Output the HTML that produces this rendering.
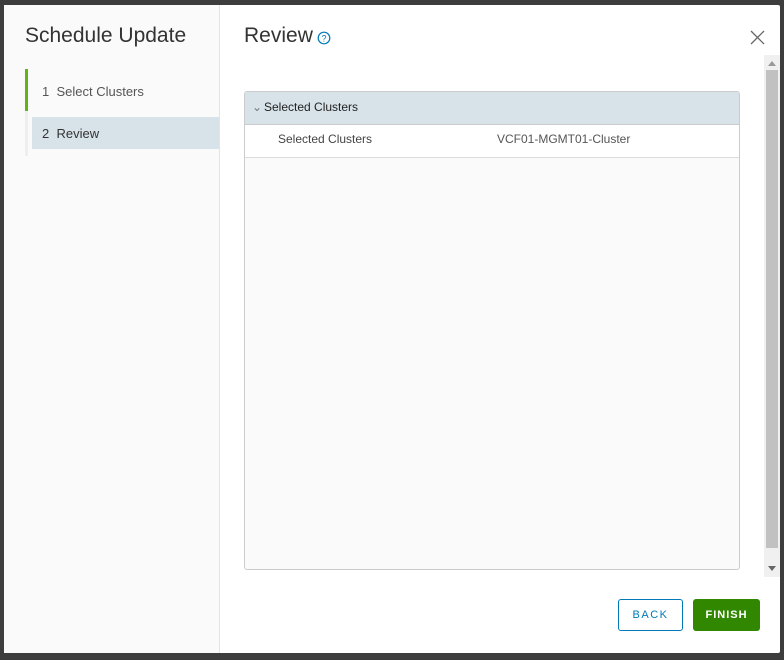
<!DOCTYPE html>
<html><head><style>
body{margin:0;width:784px;height:660px;background:#3d3d3d;font-family:"Liberation Sans",sans-serif;position:relative;overflow:hidden}
.dlg{position:absolute;left:4px;top:5px;width:776px;height:648px;background:#fff;border-radius:2px}
.left{position:absolute;left:0;top:0;width:215px;height:648px;background:#fafafa;border-right:1px solid #e4e4e4}
.t{position:absolute;font-size:21px;color:#333;font-weight:300}
.s{position:absolute;font-size:13px;color:#444}
</style></head><body>
<div class="dlg">
<div class="left">
<div class="t" style="left:21px;top:19px">Schedule Update</div>
<div style="position:absolute;left:21px;top:64px;width:3px;height:87px;background:#eee"></div>
<div style="position:absolute;left:21px;top:64px;width:3px;height:42px;background:#60b515"></div>
<div class="s" style="left:38px;top:79px;color:#555">1&nbsp;&nbsp;Select Clusters</div>
<div style="position:absolute;left:28px;top:112px;width:187px;height:32px;background:#d8e3e9"></div>
<div class="s" style="left:38px;top:121px;color:#333">2&nbsp;&nbsp;Review</div>
</div>
<div class="t" style="left:240px;top:19px">Review</div>
<svg style="position:absolute;left:313px;top:26px" width="14" height="14" viewBox="0 0 14 14"><circle cx="7" cy="7" r="5.8" fill="none" stroke="#0079b8" stroke-width="1.2"/><text x="7" y="10.5" font-size="9" text-anchor="middle" fill="#0079b8" font-family="Liberation Sans">?</text></svg>
<svg style="position:absolute;left:746px;top:25px" width="15" height="15" viewBox="0 0 15 15"><path d="M1 1L14 14M14 1L1 14" stroke="#666" stroke-width="1.3"/></svg>
<div style="position:absolute;left:240px;top:86px;width:494px;height:477px;border:1px solid #ccc;border-radius:3px;background:#fafafa;overflow:hidden">
<div style="height:32px;background:#d8e3e9;border-bottom:1px solid #ccc"></div>
<div style="position:absolute;left:7px;top:8px;font-size:12px;color:#777">&#8964;</div>
<div class="s" style="left:19px;top:8px;font-size:12px;color:#222">Selected Clusters</div>
<div style="height:32px;background:#fff;border-bottom:1px solid #ddd"></div>
<div class="s" style="left:33px;top:40px;font-size:12px;color:#444">Selected Clusters</div>
<div class="s" style="left:252px;top:40px;font-size:12px;color:#555">VCF01-MGMT01-Cluster</div>
</div>
<div style="position:absolute;left:760px;top:50px;width:16px;height:522px;background:#f0f0f0"></div>
<div style="position:absolute;left:762px;top:65px;width:12px;height:478px;background:#c1c1c1"></div>
<div style="position:absolute;left:764px;top:56px;border:4px solid transparent;border-bottom:5px solid #999;border-top:0"></div>
<div style="position:absolute;left:764px;top:561px;border:4px solid transparent;border-top:5px solid #666;border-bottom:0"></div>
<div style="position:absolute;left:614px;top:594px;width:63px;height:30px;border:1px solid #0079b8;border-radius:3px;color:#0079b8;font-size:11px;letter-spacing:1.5px;text-align:center;line-height:30px">BACK</div>
<div style="position:absolute;left:689px;top:594px;width:67px;height:32px;background:#318700;border-radius:3px;color:#fff;font-size:11px;font-weight:bold;letter-spacing:1px;text-align:center;line-height:32px">FINISH</div>
</div>
</body></html>
